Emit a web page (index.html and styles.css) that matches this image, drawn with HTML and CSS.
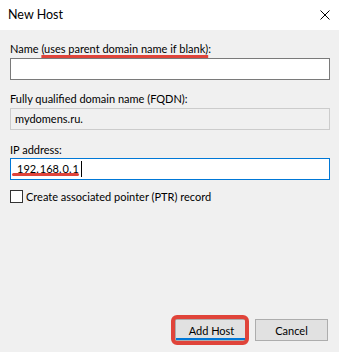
FILE: index.html
```html
<!DOCTYPE html>
<html lang="en">
<head>
    <meta charset="UTF-8">
    <title>New Host</title>
    <link rel="stylesheet" href="styles.css">
</head>
<body>
    <div class="dialog">
        <!-- Title bar -->
        <div class="titlebar">
            <span class="title">New Host</span>
            <svg class="close" width="10" height="10" viewBox="0 0 10 10">
                <path d="M0.5 0.5 L9.5 9.5 M9.5 0.5 L0.5 9.5" stroke="#000" stroke-width="1" fill="none"/>
            </svg>
        </div>

        <!-- Form -->
        <div class="content">
            <div class="label label-name">Name <span class="mark">(uses parent domain name if blank)</span>:</div>
            <div class="field"></div>

            <div class="label label-fqdn">Fully qualified domain name (FQDN):</div>
            <div class="field field-disabled">mydomens.ru.</div>

            <div class="label label-ip">IP address:</div>
            <div class="field field-focus">
                <span class="ip">192.</span><span class="ip">168.</span><span class="ip">0.</span><span class="ip">1</span><span class="caret"></span>
            </div>

            <div class="check-row">
                <span class="checkbox"></span>
                <span>Create associated pointer (PTR) record</span>
            </div>

            <div class="buttons">
                <button class="btn btn-default">Add Host</button>
                <button class="btn">Cancel</button>
            </div>
        </div>
    </div>
</body>
</html>
```

FILE: styles.css
```css
* {
    margin: 0;
    padding: 0;
    box-sizing: border-box;
}

body {
    font-family: Lato, "Noto Sans", sans-serif;
    font-size: 11px;
    color: #000;
    background-color: #fff;
}

.dialog {
    width: 339px;
    height: 352px;
    display: flex;
    flex-direction: column;
}

/* Title bar */
.titlebar {
    height: 30px;
    background-color: #fff;
    display: flex;
    align-items: center;
    justify-content: space-between;
    padding: 0 9px 1px 8px;
}

.title {
    font-size: 12.5px;
}

/* Content */
.content {
    flex-grow: 1;
    background-color: #f0f0f0;
    padding: 11px 9px 11px 10px;
    display: flex;
    flex-direction: column;
}

.label {
    line-height: 16px;
    height: 16px;
}

.label-fqdn {
    margin-top: 11px;
}

.label-ip {
    margin-top: 12px;
}

.mark {
    text-decoration: underline;
    text-decoration-color: #e0443a;
    text-decoration-thickness: 3px;
    text-underline-offset: 2px;
    text-decoration-skip-ink: none;
}

.field {
    height: 22px;
    margin-top: 1px;
    border: 1px solid #7a7a7a;
    background-color: #fff;
    padding: 0 4px;
    line-height: 20px;
    display: flex;
    align-items: center;
}

.field-disabled {
    border-color: #cccccc;
    background-color: #f0f0f0;
}

.field-focus {
    position: relative;
    margin-top: 0;
    border-color: #0078d7;
    padding-left: 6px;
}

.ip {
    margin-right: 1px;
}

.caret {
    width: 1px;
    height: 16px;
    margin-left: 1px;
    background-color: #000;
}

/* red annotation under the address */
.field-focus::after {
    content: "";
    position: absolute;
    left: 1px;
    bottom: 3px;
    width: 67px;
    height: 3px;
    border-radius: 2px;
    background-color: #e0443a;
}

.check-row {
    margin-top: 10px;
    display: flex;
    align-items: center;
    gap: 3px;
    height: 13px;
}

.checkbox {
    width: 13px;
    height: 13px;
    border: 1px solid #333;
    background-color: #fff;
}

/* Buttons */
.buttons {
    margin-top: auto;
    display: flex;
    justify-content: flex-end;
    gap: 7px;
    padding-right: 2px;
}

.btn {
    width: 73px;
    height: 22px;
    font-family: inherit;
    font-size: 11px;
    color: #000;
    background-color: #e1e1e1;
    border: 1px solid #adadad;
}

.btn-default {
    position: relative;
    box-shadow: inset 0 -2px #0078d7;
}

/* red annotation round the default button */
.btn-default::after {
    content: "";
    position: absolute;
    left: -5px;
    right: -2px;
    top: -5px;
    bottom: -5px;
    border: 4px solid #e0443a;
    border-radius: 6px;
}
```
